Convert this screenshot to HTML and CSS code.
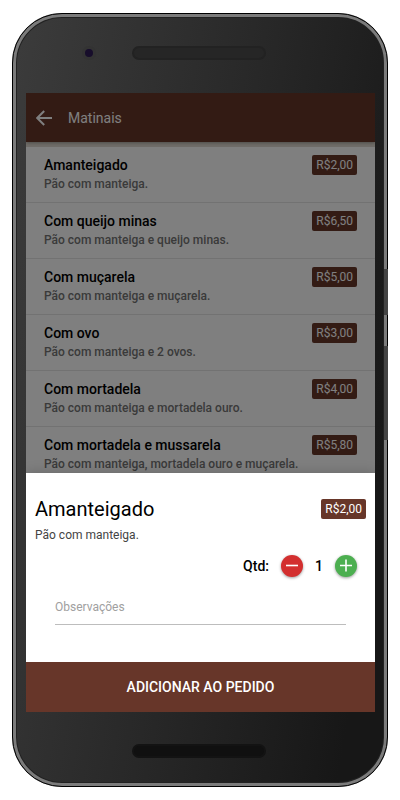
FILE: index.html
```html
<!DOCTYPE html>
<html lang="pt-BR">
<head>
  <meta charset="UTF-8" />
  <meta name="viewport" content="width=device-width, initial-scale=1.0" />
  <title>Matinais</title>
  <link rel="stylesheet" href="styles.css">
</head>
<body>
  <div class="phone">
    <span class="side-button power"></span>
    <span class="side-button volume"></span>
    <div class="bezel top">
      <span class="camera"></span>
      <span class="speaker"></span>
    </div>
    <div class="screen">
      <header class="toolbar">
        <button type="button" class="back" aria-label="Voltar">
          <svg viewBox="0 0 16 16" width="16" height="16"><path d="M16 8H1.5M8.2 1L1.2 8l7 7" fill="none" stroke="currentColor" stroke-width="2" /></svg>
        </button>
        <h1>Matinais</h1>
      </header>
      <ul class="products">
        <li>
          <div class="info">
            <h2>Amanteigado</h2>
            <p>Pão com manteiga.</p>
          </div>
          <span class="price">R$2,00</span>
        </li>
        <li>
          <div class="info">
            <h2>Com queijo minas</h2>
            <p>Pão com manteiga e queijo minas.</p>
          </div>
          <span class="price">R$6,50</span>
        </li>
        <li>
          <div class="info">
            <h2>Com muçarela</h2>
            <p>Pão com manteiga e muçarela.</p>
          </div>
          <span class="price">R$5,00</span>
        </li>
        <li>
          <div class="info">
            <h2>Com ovo</h2>
            <p>Pão com manteiga e 2 ovos.</p>
          </div>
          <span class="price">R$3,00</span>
        </li>
        <li>
          <div class="info">
            <h2>Com mortadela</h2>
            <p>Pão com manteiga e mortadela ouro.</p>
          </div>
          <span class="price">R$4,00</span>
        </li>
        <li>
          <div class="info">
            <h2>Com mortadela e mussarela</h2>
            <p>Pão com manteiga, mortadela ouro e muçarela.</p>
          </div>
          <span class="price">R$5,80</span>
        </li>
      </ul>
      <div class="backdrop"></div>
      <form class="sheet">
        <div class="sheet-body">
          <div class="sheet-title">
            <h2>Amanteigado</h2>
            <span class="price">R$2,00</span>
          </div>
          <p>Pão com manteiga.</p>
          <div class="quantity">
            <label for="qty">Qtd:</label>
            <button type="button" class="round minus" aria-label="Diminuir">
              <svg viewBox="0 0 22 22" width="22" height="22"><path d="M5 10.5h12" stroke="currentColor" stroke-width="1.6" /></svg>
            </button>
            <output id="qty">1</output>
            <button type="button" class="round plus" aria-label="Aumentar">
              <svg viewBox="0 0 22 22" width="22" height="22"><path d="M5 10.5h12M11 4.5v12" stroke="currentColor" stroke-width="1.6" /></svg>
            </button>
          </div>
          <input type="text" class="notes" placeholder="Observações" aria-label="Observações" />
        </div>
        <button type="submit" class="add">ADICIONAR AO PEDIDO</button>
      </form>
    </div>
    <div class="bezel bottom">
      <span class="speaker"></span>
    </div>
  </div>
  <script>
    const qty = document.querySelector('#qty');

    document.querySelector('.minus').addEventListener('click', () => {
      qty.value = Math.max(1, Number(qty.value) - 1);
    });

    document.querySelector('.plus').addEventListener('click', () => {
      qty.value = Number(qty.value) + 1;
    });

    document.querySelector('.sheet').addEventListener('submit', e => {
      e.preventDefault();
    });
  </script>
</body>
</html>
```

FILE: styles.css
```css
* {
  box-sizing: border-box;
}
body {
  margin: 0;
  padding: 13px 12px;
  min-height: 100vh;
  display: flex;
  background: #fff;
  font-family: Roboto, 'Liberation Sans', sans-serif;
  font-size: 12px;
  color: #000;
}
h1, h2, p, ul {
  margin: 0;
  padding: 0;
}
button {
  border: none;
  padding: 0;
  font-family: inherit;
  cursor: pointer;
}
svg {
  display: block;
}

/* device */
.phone {
  position: relative;
  flex: 1;
  display: flex;
  flex-direction: column;
  padding: 0 9px 0 10px;
  border: 4px solid #7b7b7b;
  border-radius: 50px;
  background: linear-gradient(100deg, #3c3c3c, #282828 50%, #171717 90%);
  background-origin: border-box;
  box-shadow: inset 0 0 0 1px #222;
  outline: 1px solid #000;
  outline-offset: -1px;
}
.side-button {
  position: absolute;
  right: -4px;
  width: 4px;
  background: #444;
}
.power {
  top: 252px;
  height: 46px;
}
.volume {
  top: 329px;
  height: 94px;
}
.bezel {
  display: grid;
  grid-template-columns: 1fr 134px 1fr;
  align-items: center;
  padding-right: 4px;
}
.bezel.top {
  height: 76px;
  padding-bottom: 4px;
}
.bezel.bottom {
  height: 71px;
  padding-top: 7px;
}
.speaker {
  grid-column: 2;
  height: 14px;
  border-radius: 7px;
  background: #262626;
  border: 2px solid #222;
}
.bottom .speaker {
  background: #101010;
  border-color: #131313;
}
.camera {
  justify-self: end;
  width: 14px;
  height: 14px;
  margin-right: 36px;
  border: 3px solid #333;
  border-radius: 50%;
  background: #170d2b;
}

/* app */
.screen {
  position: relative;
  flex: 1;
  overflow: hidden;
  background: #fff;
}
.toolbar {
  position: relative;
  display: flex;
  align-items: center;
  gap: 16px;
  height: 49px;
  padding: 0 10px;
  background: #673629;
  color: #fff;
  box-shadow: 0 1px 3px rgba(0, 0, 0, 0.3);
}
.back {
  background: none;
  color: inherit;
}
.toolbar h1 {
  font-size: 14px;
  font-weight: 400;
}
.products {
  list-style: none;
  border-top: 5px solid #dfd9d0;
}
.products li {
  display: flex;
  justify-content: space-between;
  align-items: flex-start;
  height: 56px;
  padding: 8px 18px;
  border-bottom: 1px solid #e4e4e4;
}
.products h2 {
  font-size: 14px;
  line-height: 20px;
  font-weight: 500;
}
.products p {
  line-height: 18px;
  font-weight: 500;
  color: #757575;
}
.price {
  padding: 0 4px;
  border-radius: 2px;
  background: #673629;
  color: #fff;
  line-height: 20px;
}
.backdrop {
  position: absolute;
  inset: 0;
  background: rgba(0, 0, 0, 0.5);
}

/* bottom sheet */
.sheet {
  position: absolute;
  left: 0;
  right: 0;
  bottom: 0;
  background: #fff;
  box-shadow: 0 0 12px rgba(0, 0, 0, 0.2);
}
.sheet-body {
  padding: 24px 9px 37px;
}
.sheet-title {
  display: flex;
  justify-content: space-between;
  align-items: center;
}
.sheet-title h2 {
  font-size: 20px;
  line-height: 24px;
  font-weight: 400;
}
.sheet-body p {
  padding-top: 6px;
  line-height: 16px;
  color: #444;
}
.quantity {
  display: flex;
  justify-content: flex-end;
  align-items: center;
  gap: 12px;
  padding: 12px 9px 0;
  font-size: 14px;
  font-weight: 500;
}
.quantity output {
  width: 8px;
  text-align: center;
}
.round {
  width: 22px;
  height: 22px;
  border-radius: 50%;
  color: #fff;
  box-shadow: 0 1px 3px rgba(0, 0, 0, 0.4);
}
.minus {
  background: #d32f2f;
}
.plus {
  background: #4caf50;
}
.notes {
  display: block;
  width: calc(100% - 40px);
  height: 36px;
  margin: 12px 20px 0;
  padding: 0;
  border: none;
  border-bottom: 1px solid #bdbdbd;
  border-radius: 0;
  outline: none;
  background: none;
  font-family: inherit;
  font-size: 12px;
}
.notes::placeholder {
  color: #a0a0a0;
}
.add {
  display: block;
  width: 100%;
  height: 50px;
  background: #673629;
  color: #fff;
  font-size: 14px;
  font-weight: 500;
}
```
